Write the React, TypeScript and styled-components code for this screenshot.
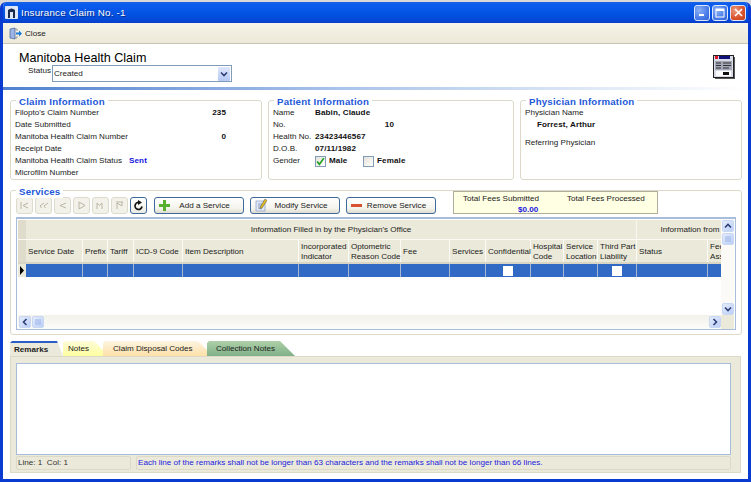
import React from "react";
import styled, { createGlobalStyle } from "styled-components";

const GlobalStyle = createGlobalStyle`
    html, body {
        margin: 0;
        padding: 0;
        width: 751px;
        height: 482px;
        overflow: hidden;
        background: #d8d8d8;
        font-family: "Liberation Sans", Arial, sans-serif;
        font-size: 8.1px;
        color: #222;
    }
`;

const Window = styled.div`
    width: 751px;
    height: 480px;
    margin-top: 2px;
    display: flex;
    flex-direction: column;
    box-sizing: border-box;
    border: solid #0a3bd0;
    border-width: 0 3px 3px 3px;
    border-radius: 6px 6px 0 0;
    background: #fff;
    overflow: hidden;
`;

const TitleBar = styled.div`
    height: 21px;
    margin: 0 -3px;
    padding: 0 5px 0 5px;
    flex: none;
    display: flex;
    align-items: center;
    gap: 2px;
    background: linear-gradient(180deg, #1a62e4 0%, #0a5cf0 12%, #0454e4 50%, #0349d6 85%, #0a3ec8 100%);
`;

const Title = styled.span`
    flex: 1;
    margin-left: 1px;
    color: #fff;
    font-size: 9.8px;
    letter-spacing: 0.2px;
    text-shadow: 1px 1px 0 #0a2f90;
`;

const CaptionButton = styled.div<{ $close?: boolean }>`
    width: 16px;
    height: 16px;
    box-sizing: border-box;
    border: 1px solid #dfe8fb;
    border-radius: 3px;
    background: ${({ $close }) =>
        $close
            ? "radial-gradient(circle at 30% 30%, #ec9a7c, #d8512c 60%, #c2401f)"
            : "radial-gradient(circle at 30% 30%, #8cb0f6, #4a7ce8 60%, #3060d4)"};
    display: flex;
    align-items: center;
    justify-content: center;
`;

const Toolbar = styled.div`
    height: 21px;
    flex: none;
    display: flex;
    align-items: center;
    gap: 3px;
    padding-left: 6px;
    background: linear-gradient(180deg, #f6f4ea 0%, #ece9d8 100%);
    border-bottom: 1px solid #c8c5b2;
    box-sizing: border-box;
`;

const Header = styled.div`
    height: 43px;
    flex: none;
    box-sizing: border-box;
    padding: 8px 13px 0 16px;
    display: flex;
    justify-content: space-between;
`;

const FormTitle = styled.div`
    font-size: 12.6px;
    line-height: 13px;
    color: #000;
`;

const StatusRow = styled.div`
    display: flex;
    align-items: flex-start;
    padding-left: 9px;
    gap: 2px;
`;

const StatusLabel = styled.span`
    width: 22px;
    line-height: 12px;
`;

const ComboBox = styled.div`
    width: 180px;
    height: 17px;
    box-sizing: border-box;
    border: 1px solid #7f9db9;
    display: flex;
    align-items: center;
    justify-content: space-between;
    padding: 0 1px 0 1px;
`;

const ComboArrow = styled.div`
    width: 12px;
    height: 14px;
    background: linear-gradient(180deg, #dfe7fc, #b4c8f4);
    border-radius: 1px;
    display: flex;
    align-items: center;
    justify-content: center;
`;

const ReportIcon = styled.div`
    margin-top: 3px;
`;

const Divider = styled.div`
    height: 3px;
    flex: none;
    background: linear-gradient(90deg, #4f81cf 0%, #a9c3ea 45%, #fff 100%);
`;

const Body = styled.div`
    flex: 1;
    display: flex;
    flex-direction: column;
    padding: 10px 6px 0 7px;
    min-height: 0;
`;

const InfoRow = styled.div`
    display: flex;
    gap: 6px;
    height: 80px;
    flex: none;
`;

const GroupBox = styled.div<{ $width?: number }>`
    position: relative;
    box-sizing: border-box;
    width: ${({ $width }) => ($width ? `${$width}px` : "auto")};
    border: 1px solid #dcd9c8;
    border-radius: 3px;
    padding: 6px 4px 0 4px;
`;

const GroupTitle = styled.span`
    position: absolute;
    top: -5px;
    left: 5px;
    padding: 0 3px;
    background: #fff;
    color: #2458d8;
    font-size: 9.7px;
    line-height: 12px;
    font-weight: bold;
    letter-spacing: 0.2px;
`;

const Field = styled.div<{ $height?: number }>`
    display: flex;
    height: ${({ $height }) => $height ?? 12}px;
    line-height: 12px;
    white-space: nowrap;
`;

const Label = styled.span<{ $width?: number }>`
    width: ${({ $width }) => ($width ? `${$width}px` : "auto")};
    flex: none;
`;

const Value = styled.span<{ $width?: number; $right?: boolean; $blue?: boolean; $indent?: number }>`
    font-weight: bold;
    letter-spacing: 0.1px;
    color: ${({ $blue }) => ($blue ? "#1414e0" : "#111")};
    width: ${({ $width }) => ($width ? `${$width}px` : "auto")};
    text-align: ${({ $right }) => ($right ? "right" : "left")};
    margin-left: ${({ $indent }) => $indent ?? 0}px;
`;

const CheckOption = styled.div<{ $gapAfter?: number }>`
    display: flex;
    align-items: center;
    gap: 3px;
    font-weight: bold;
    letter-spacing: 0.1px;
    color: #111;
    width: ${({ $gapAfter }) => $gapAfter ?? 60}px;
`;

const CheckBox = styled.div`
    width: 11px;
    height: 11px;
    box-sizing: border-box;
    border: 1px solid #7f9db9;
    background: linear-gradient(135deg, #e4e2d6, #fff);
    display: flex;
    align-items: center;
    justify-content: center;
`;

const ServicesBox = styled(GroupBox)`
    margin-top: 10px;
    height: 145px;
    flex: none;
    padding: 0 4px 0 5px;
    display: flex;
    flex-direction: column;
`;

const ServiceBar = styled.div`
    height: 20px;
    margin-top: 5px;
    display: flex;
    align-items: flex-start;
    flex: none;
`;

const NavButton = styled.div<{ $active?: boolean }>`
    width: 17px;
    height: 17px;
    box-sizing: border-box;
    margin-right: 2px;
    margin-top: 1px;
    border: 1px solid ${({ $active }) => ($active ? "#3c6a9c" : "#dddbcc")};
    border-radius: 3px;
    background: ${({ $active }) => ($active ? "linear-gradient(180deg,#fff,#ecebe2)" : "#f3f2ea")};
    display: flex;
    align-items: center;
    justify-content: center;
`;

const ActionButton = styled.div<{ $indent?: number }>`
    width: 90px;
    height: 17px;
    box-sizing: border-box;
    margin: 1px 6px 0 ${({ $indent }) => $indent ?? 0}px;
    border: 1px solid #3c6a9c;
    border-radius: 3px;
    background: linear-gradient(180deg, #fff 0%, #f4f3ec 70%, #dedcd0 100%);
    display: flex;
    align-items: center;
    padding: 0 4px;
    color: #222;
`;

const ActionLabel = styled.span`
    flex: 1;
    text-align: center;
    white-space: nowrap;
`;

const TotalsBox = styled.div`
    width: 205px;
    height: 23px;
    margin: -5px 0 0 11px;
    box-sizing: border-box;
    border: 1px solid #b0ae98;
    background: #ffffe4;
    padding: 1px 9px;
    line-height: 11px;
    display: grid;
    grid-template-columns: 104px 1fr;
    color: #222;
    white-space: nowrap;
`;

const TotalsAmount = styled.span`
    color: #1414e0;
    font-weight: bold;
    grid-column: 1;
    padding-left: 55px;
`;

const GridFrame = styled.div`
    margin-top: 1px;
    width: 720px;
    height: 113px;
    box-sizing: border-box;
    border: 1px solid #a8bcdc;
    border-top-width: 2px;
    display: grid;
    grid-template-columns: 1fr 13px;
    grid-template-rows: 1fr 14px;
    padding: 0 1px 0 1px;
    background: #fff;
`;

const GridView = styled.div`
    overflow: hidden;
    min-width: 0;
    display: flex;
    flex-direction: column;
`;

const BandRow = styled.div`
    height: 20px;
    margin-top: 1px;
    flex: none;
    display: flex;
    background: #ebe9d9;
    border-bottom: 1px solid #fbfaf5;
    box-sizing: border-box;
    width: 720px;
`;

const Corner = styled.div`
    width: 8px;
    flex: none;
    background: #dfdccb;
`;

const BandCell = styled.div<{ $width: number }>`
    width: ${({ $width }) => $width}px;
    flex: none;
    text-align: center;
    line-height: 19px;
    border-right: 1px solid #f8f7f0;
    box-sizing: border-box;
    white-space: nowrap;
`;

const HeaderRow = styled.div`
    height: 24px;
    flex: none;
    display: flex;
    background: #ebe9d9;
    border-bottom: 2px solid #d8d5c4;
    box-sizing: border-box;
    width: 720px;
`;

const HeaderCell = styled.div<{ $width: number }>`
    width: ${({ $width }) => $width}px;
    flex: none;
    box-sizing: border-box;
    padding: 2px 0 0 2px;
    display: flex;
    align-items: center;
    line-height: 10.5px;
    border-right: 1px solid #fbfaf5;
    white-space: pre;
`;

const DataRow = styled.div`
    height: 13px;
    flex: none;
    display: flex;
    width: 720px;
`;

const RowMarker = styled.div`
    width: 8px;
    flex: none;
    background: #ebe9d9;
    display: flex;
    align-items: center;
    justify-content: center;
`;

const DataCell = styled.div<{ $width: number }>`
    width: ${({ $width }) => $width}px;
    flex: none;
    box-sizing: border-box;
    background: #316ac5;
    border-right: 1px solid #a8b8d0;
    display: flex;
    align-items: center;
    justify-content: center;
`;

const CellCheck = styled.div`
    width: 10px;
    height: 10px;
    background: #fff;
`;

const VScroll = styled.div`
    display: flex;
    flex-direction: column;
    background: #fbfaf6;
    justify-content: space-between;
`;

const HScroll = styled.div`
    display: flex;
    justify-content: space-between;
    background: linear-gradient(180deg, #f2f1ea 0%, #fcfcf9 100%);
`;

const ScrollButton = styled.div`
    width: 12px;
    height: 12px;
    margin: 1px 0 0 1px;
    border: 1px solid #c8d8f4;
    box-sizing: border-box;
    border-radius: 2px;
    background: linear-gradient(135deg, #e4ecfc, #bccff6);
    display: flex;
    align-items: center;
    justify-content: center;
    flex: none;
`;

const ScrollGroup = styled.div<{ $column?: boolean }>`
    display: flex;
    flex-direction: ${({ $column }) => ($column ? "column" : "row")};
`;

const ScrollCorner = styled.div`
    background: #ebe9d9;
`;

const TabStrip = styled.div`
    margin-top: 6px;
    height: 15px;
    flex: none;
    display: flex;
    position: relative;
    z-index: 1;
`;

const Tab = styled.div<{ $bg: string; $width: number; $overlap?: number; $bold?: boolean; $pad: number }>`
    width: ${({ $width }) => $width}px;
    height: 15px;
    box-sizing: border-box;
    margin-left: ${({ $overlap }) => -($overlap ?? 0)}px;
    padding-left: ${({ $pad }) => $pad}px;
    line-height: 15px;
    background: ${({ $bg }) => $bg};
    font-weight: ${({ $bold }) => ($bold ? "bold" : "normal")};
    color: #222;
    white-space: nowrap;
    clip-path: polygon(0 2px, 2px 0, calc(100% - 15px) 0, 100% 100%, 0 100%);
`;

const ActiveTab = styled(Tab)`
    border-top: 2px solid #2a5fc8;
    line-height: 13px;
    clip-path: polygon(0 2px, 2px 0, calc(100% - 6px) 0, 100% 100%, 0 100%);
`;

const TabPanel = styled.div`
    width: 731px;
    height: 117px;
    flex: none;
    box-sizing: border-box;
    background: #ebe9d9;
    border: 1px solid #dcd9c8;
    padding: 6px 9px 3px 5px;
    display: flex;
    flex-direction: column;
    gap: 1px;
`;

const RemarksArea = styled.div`
    height: 92px;
    flex: none;
    box-sizing: border-box;
    background: #fff;
    border: 1px solid #a8bcdc;
`;

const StatusStrip = styled.div`
    display: flex;
    gap: 5px;
    height: 14px;
    flex: none;
`;

const StatusCell = styled.div<{ $width?: number; $blue?: boolean }>`
    ${({ $width }) => ($width ? `width: ${$width}px; flex: none;` : "flex: 1;")}
    box-sizing: border-box;
    border: 1px solid #dcd9c8;
    border-radius: 2px;
    padding-left: 1px;
    line-height: 12px;
    white-space: nowrap;
    color: ${({ $blue }) => ($blue ? "#1c1ce0" : "#333")};
`;

const ChevronIcon = styled.svg<{ $turn: number }>`
    transform: rotate(${({ $turn }) => $turn}deg);
`;

const COLUMNS: [string, number][] = [
    ["Service Date", 57],
    ["Prefix", 25],
    ["Tariff", 26],
    ["ICD-9 Code", 49],
    ["Item Description", 116],
    ["Incorporated\nIndicator", 50],
    ["Optometric\nReason Code", 52],
    ["Fee", 49],
    ["Services", 36],
    ["Confidential", 45],
    ["Hospital\nCode", 33],
    ["Service\nLocation", 34],
    ["Third Part\nLiability", 39],
    ["Status", 71],
    ["Fee\nAss", 20],
];

const Chevron: React.FC<{ dir: "up" | "down" | "left" | "right" }> = ({ dir }) => {
    const turn = { up: 180, down: 0, left: 90, right: -90 }[dir];
    return (
        <ChevronIcon $turn={turn} width="8" height="8" viewBox="0 0 8 8">
            <path d="M1 2.5 L4 5.5 L7 2.5" fill="none" stroke="#2c3f78" strokeWidth="1.6" />
        </ChevronIcon>
    );
};

const NAV_PATHS = [
    "M2 2v7M9 3L4 5.5L9 8",
    "M2 6L6 3M6 6L10 3M2 6L3.5 8M6 6L7.5 8",
    "M9 3L3 5.5L9 8",
    "M3 2v7l6-3.5z",
    "M2 9V3l2.500 2.500L7 3v6",
    "M2 2h7M3 9V3l5 3V2",
];

const App: React.FC = () => {
    return (
        <>
            <GlobalStyle />
            <Window>
                <TitleBar>
                    <svg width="13" height="13" viewBox="0 0 13 13">
                        <rect width="13" height="13" rx="1" fill="#dfe6f4" />
                        <path d="M3 12V4q3.500-3 7 0v8H8V6H5v6z" fill="#1c2c50" />
                    </svg>
                    <Title>Insurance Claim No. -1</Title>
                    <CaptionButton>
                        <svg width="11" height="11" viewBox="0 0 11 11">
                            <rect x="2" y="7" width="5" height="2" fill="#fff" />
                        </svg>
                    </CaptionButton>
                    <CaptionButton>
                        <svg width="12" height="12" viewBox="0 0 12 12">
                            <rect x="2" y="2" width="8" height="8" fill="none" stroke="#fff" />
                            <rect x="2" y="2" width="8" height="2" fill="#fff" />
                        </svg>
                    </CaptionButton>
                    <CaptionButton $close>
                        <svg width="11" height="11" viewBox="0 0 11 11">
                            <path d="M2 2L9 9M9 2L2 9" stroke="#fff" strokeWidth="1.6" />
                        </svg>
                    </CaptionButton>
                </TitleBar>
                <Toolbar>
                    <svg width="13" height="13" viewBox="0 0 13 13">
                        <path d="M1 2L6 1v11l-5-1z" fill="#9db4e4" stroke="#44609c" strokeWidth="0.7" />
                        <path d="M6 2h2M6 11h2M8 2v2M8 9v2" stroke="#8a8a8a" strokeWidth="0.8" />
                        <path d="M7 5.500h3V3.500l3 3-3 3V7.500H7z" fill="#1c7cd8" />
                    </svg>
                    <span>Close</span>
                </Toolbar>
                <Header>
                    <div>
                        <FormTitle>Manitoba Health Claim</FormTitle>
                        <StatusRow>
                            <StatusLabel>Status</StatusLabel>
                            <ComboBox>
                                <span>Created</span>
                                <ComboArrow>
                                    <Chevron dir="down" />
                                </ComboArrow>
                            </ComboBox>
                        </StatusRow>
                    </div>
                    <ReportIcon>
                        <svg width="22" height="24" viewBox="0 0 22 24">
                            <rect x="2" y="2" width="20" height="22" fill="#555" />
                            <rect x="0.500" y="0.500" width="20" height="22" fill="#d8dae6" stroke="#222" />
                            <rect x="6" y="1" width="11" height="3" fill="#10107c" />
                            <rect x="2" y="1" width="3" height="3" fill="#e01028" />
                            <rect x="2" y="6" width="17" height="9" fill="#a4a8b8" />
                            <path d="M3 8h5M3 10.500h5M3 13h5M10 8h8M10 10.500h8M10 13h6" stroke="#333" />
                            <rect x="3" y="16" width="15" height="5" fill="#fff" />
                            <rect x="10" y="17" width="6" height="3" fill="#111" />
                        </svg>
                    </ReportIcon>
                </Header>
                <Divider />
                <Body>
                    <InfoRow>
                        <GroupBox $width={252}>
                            <GroupTitle>Claim Information</GroupTitle>
                            <Field>
                                <Label $width={175}>Filopto's Claim Number</Label>
                                <Value $width={36} $right>235</Value>
                            </Field>
                            <Field>
                                <Label>Date Submitted</Label>
                            </Field>
                            <Field>
                                <Label $width={175}>Manitoba Health Claim Number</Label>
                                <Value $width={36} $right>0</Value>
                            </Field>
                            <Field>
                                <Label>Receipt Date</Label>
                            </Field>
                            <Field>
                                <Label $width={114}>Manitoba Health Claim Status</Label>
                                <Value $blue>Sent</Value>
                            </Field>
                            <Field>
                                <Label>Microfilm Number</Label>
                            </Field>
                        </GroupBox>
                        <GroupBox $width={246}>
                            <GroupTitle>Patient Information</GroupTitle>
                            <Field>
                                <Label $width={42}>Name</Label>
                                <Value>Babin, Claude</Value>
                            </Field>
                            <Field>
                                <Label $width={42}>No.</Label>
                                <Value $width={79} $right>10</Value>
                            </Field>
                            <Field>
                                <Label $width={42}>Health No.</Label>
                                <Value>23423446567</Value>
                            </Field>
                            <Field>
                                <Label $width={42}>D.O.B.</Label>
                                <Value>07/11/1982</Value>
                            </Field>
                            <Field>
                                <Label $width={42}>Gender</Label>
                                <CheckOption $gapAfter={48}>
                                    <CheckBox>
                                        <svg width="9" height="9" viewBox="0 0 8 8">
                                            <path d="M1 4l2 2.500L7 1" fill="none" stroke="#21a121" strokeWidth="1.500" />
                                        </svg>
                                    </CheckBox>
                                    Male
                                </CheckOption>
                                <CheckOption>
                                    <CheckBox />
                                    Female
                                </CheckOption>
                            </Field>
                        </GroupBox>
                        <GroupBox $width={222}>
                            <GroupTitle>Physician Information</GroupTitle>
                            <Field>
                                <Label>Physician Name</Label>
                            </Field>
                            <Field $height={18}>
                                <Value $indent={12}>Forrest, Arthur</Value>
                            </Field>
                            <Field>
                                <Label>Referring Physician</Label>
                            </Field>
                        </GroupBox>
                    </InfoRow>
                    <ServicesBox $width={732}>
                        <GroupTitle>Services</GroupTitle>
                        <ServiceBar>
                            {NAV_PATHS.map((d) => (
                                <NavButton key={d}>
                                    <svg width="11" height="11" viewBox="0 0 11 11">
                                        <path d={d} fill="none" stroke="#b8b6a4" />
                                    </svg>
                                </NavButton>
                            ))}
                            <NavButton $active>
                                <svg width="11" height="11" viewBox="0 0 11 11">
                                    <path d="M9 6.500A3.500 3.500 0 1 1 6 2.500" fill="none" stroke="#111" strokeWidth="1.700" />
                                    <path d="M5 0l4 2.500-4 2.500z" fill="#111" />
                                </svg>
                            </NavButton>
                            <ActionButton $indent={5}>
                                <svg width="11" height="11" viewBox="0 0 11 11">
                                    <path d="M4 0h3v4h4v3H7v4H4V7H0V4h4z" fill="#58b030" />
                                </svg>
                                <ActionLabel>Add a Service</ActionLabel>
                            </ActionButton>
                            <ActionButton>
                                <svg width="12" height="13" viewBox="0 0 12 13">
                                    <rect x="1" y="2" width="9" height="10" fill="#dfe8f8" stroke="#8c9cc0" strokeWidth="0.7" />
                                    <path d="M3 5h4M3 7h4M3 9h4" stroke="#8c9cc0" />
                                    <path d="M10 0l2 1.500L7 9l-2 1 .4-2.200z" fill="#e8c020" stroke="#444" strokeWidth="0.5" />
                                </svg>
                                <ActionLabel>Modify Service</ActionLabel>
                            </ActionButton>
                            <ActionButton>
                                <svg width="11" height="11" viewBox="0 0 11 11">
                                    <rect x="0" y="4" width="11" height="3" fill="#d85030" />
                                </svg>
                                <ActionLabel>Remove Service</ActionLabel>
                            </ActionButton>
                            <TotalsBox>
                                <span>Total Fees Submitted</span>
                                <span>Total Fees Processed</span>
                                <TotalsAmount>$0.00</TotalsAmount>
                            </TotalsBox>
                        </ServiceBar>
                        <GridFrame>
                            <GridView>
                                <BandRow>
                                    <Corner />
                                    <BandCell $width={611}>Information Filled in by the Physician's Office</BandCell>
                                    <BandCell $width={107}>Information from</BandCell>
                                </BandRow>
                                <HeaderRow>
                                    <Corner />
                                    {COLUMNS.map(([title, width]) => (
                                        <HeaderCell key={title} $width={width}>{title}</HeaderCell>
                                    ))}
                                </HeaderRow>
                                <DataRow>
                                    <RowMarker>
                                        <svg width="6" height="9" viewBox="0 0 6 9">
                                            <path d="M1 0l4 4.500L1 9z" fill="#000" />
                                        </svg>
                                    </RowMarker>
                                    {COLUMNS.map(([title, width]) => (
                                        <DataCell key={title} $width={width}>
                                            {(title === "Confidential" || title.startsWith("Third")) && <CellCheck />}
                                        </DataCell>
                                    ))}
                                </DataRow>
                            </GridView>
                            <VScroll>
                                <ScrollGroup $column>
                                    <ScrollButton><Chevron dir="up" /></ScrollButton>
                                    <ScrollButton>
                                        <svg width="6" height="6" viewBox="0 0 6 6">
                                            <path d="M0 1h6M0 3h6M0 5h6" stroke="#9cb4e8" />
                                        </svg>
                                    </ScrollButton>
                                </ScrollGroup>
                                <ScrollButton><Chevron dir="down" /></ScrollButton>
                            </VScroll>
                            <HScroll>
                                <ScrollGroup>
                                    <ScrollButton><Chevron dir="left" /></ScrollButton>
                                    <ScrollButton>
                                        <svg width="6" height="6" viewBox="0 0 6 6">
                                            <path d="M1 0v6M3 0v6M5 0v6" stroke="#9cb4e8" />
                                        </svg>
                                    </ScrollButton>
                                </ScrollGroup>
                                <ScrollButton><Chevron dir="right" /></ScrollButton>
                            </HScroll>
                            <ScrollCorner />
                        </GridFrame>
                    </ServicesBox>
                    <TabStrip>
                        <ActiveTab $bg="#ebe9d9" $width={53} $bold $pad={4}>Remarks</ActiveTab>
                        <Tab $bg="linear-gradient(180deg,#fcfcd8,#ffffa0)" $width={46} $pad={5}>Notes</Tab>
                        <Tab $bg="linear-gradient(180deg,#fdf4e0,#fde0a8)" $width={110} $overlap={6} $pad={10}>Claim Disposal Codes</Tab>
                        <Tab $bg="linear-gradient(180deg,#aed0a8,#80b088)" $width={88} $overlap={6} $pad={9}>Collection Notes</Tab>
                    </TabStrip>
                    <TabPanel>
                        <RemarksArea />
                        <StatusStrip>
                            <StatusCell $width={115}>Line: 1&nbsp;&nbsp;Col: 1</StatusCell>
                            <StatusCell $blue>Each line of the remarks shall not be longer than 63 characters and the remarks shall not be longer than 66 lines.</StatusCell>
                        </StatusStrip>
                    </TabPanel>
                </Body>
            </Window>
        </>
    );
};

export default App;
